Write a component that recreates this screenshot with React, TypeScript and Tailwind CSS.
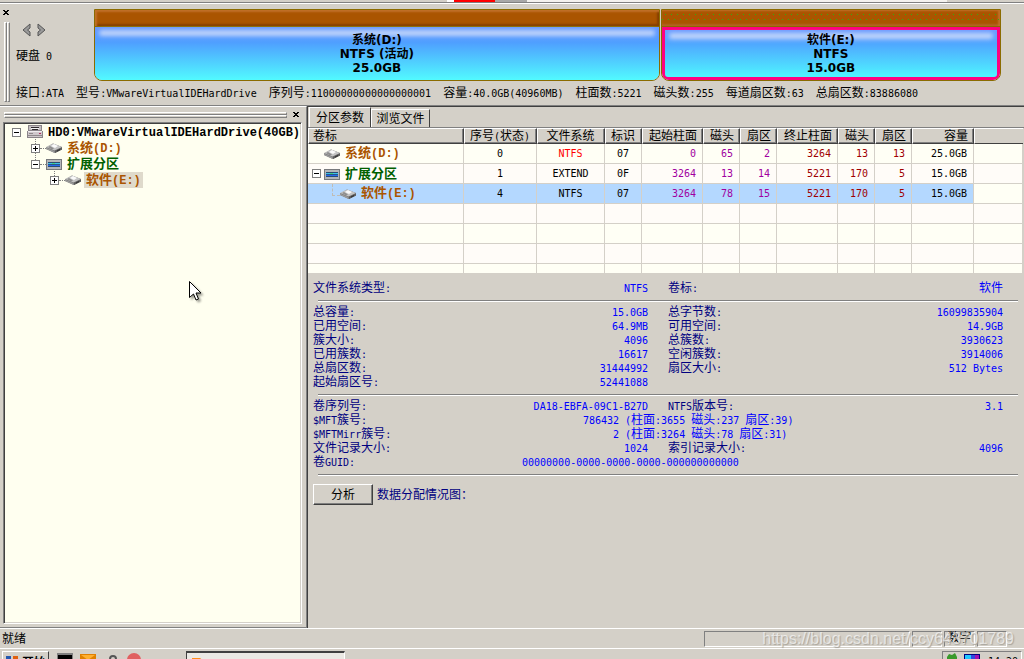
import React from "react";

const SANS = "font-['DejaVu_Sans_Mono','Noto_Sans_CJK_SC',monospace]";

/* Latin runs are set smaller than the Chinese so that a letter takes half a Chinese cell. */
function Txt({ children, bold = false }: { children: string; bold?: boolean }) {
  const runs = children.match(/[\x00-\x7f]+|[^\x00-\x7f]+/g) ?? [];
  return (
    <span className={bold ? "whitespace-pre font-bold text-[13px]" : "whitespace-pre text-[12px]"}>
      {runs.map((r, i) =>
        r.charCodeAt(0) < 128 ? (
          <span key={i} className={bold ? "font-['Liberation_Mono',monospace] text-[12px]" : "text-[10px]"}>
            {r}
          </span>
        ) : (
          <React.Fragment key={i}>{r}</React.Fragment>
        ),
      )}
    </span>
  );
}

function CloseIcon() {
  return (
    <svg width="7" height="6" viewBox="0 0 7 6" shapeRendering="crispEdges" aria-hidden="true">
      <path d="M0 0h2v1h-2zM4 0h2v1h-2zM1 1h4v1h-4zM2 2h2v1h-2zM1 3h4v1h-4zM0 4h2v1h-2zM4 4h2v1h-2z" />
    </svg>
  );
}

function VolumeIcon() {
  return (
    <svg width="16" height="16" viewBox="0 0 16 16" className="shrink-0" aria-hidden="true">
      <path d="M0 7.500L7 3.500 16 7v2.500L9 13 0 9z" fill="#707070" />
      <path d="M0 7L7 3.500 16 7 8.500 10.500z" fill="#c4c4c4" />
      <path d="M5 6L8 4 12 6 9 8z" fill="#fafafa" />
      <path d="M0 7.500l8.500 3.500v2L0 9z" fill="#9a9a9a" />
      <path d="M9 11l7-3.500v2L9 13z" fill="#5c5c5c" />
      <path d="M11 10.500l3-1.500v1l-3 1.500z" fill="#2f2f2f" />
      <path d="M2 7l2-1 4 2.500-2 1z" fill="#8e8e8e" />
    </svg>
  );
}

function DiskIcon() {
  return (
    <svg width="16" height="16" viewBox="0 0 16 16" shapeRendering="crispEdges" className="shrink-0" aria-hidden="true">
      <path d="M1 1h14v6h1v7H0V7h1z" fill="#8b8589" />
      <path d="M2 2h12v4H2z" fill="#c4bec1" />
      <path d="M1 7h14v1H1z" fill="#f0ecee" />
      <path d="M1 8h14v5H1z" fill="#cfc8cb" />
      <path d="M4 3h8v1H4zM5 5h6v1H5z" fill="#2e2a2c" />
      <path d="M4 4h8v1H4z" fill="#f4f4f4" />
      <path d="M2 9h4v1H2zM1 11h14v1H1z" fill="#8f898b" />
      <path d="M12 9h2v1h-2z" fill="#b03060" />
    </svg>
  );
}

function ExtendIcon() {
  return (
    <svg width="16" height="16" viewBox="0 0 16 16" shapeRendering="crispEdges" className="shrink-0" aria-hidden="true">
      <path d="M0 3h16v11H0z" fill="#77797c" />
      <path d="M1 4h14v9H1z" fill="#b4b6b9" />
      <path d="M2 6h12v5H2z" fill="#2c4c72" />
      <path d="M2 7h5v1H2zM9 7h5v1H9z" fill="#40c0e8" />
      <path d="M2 8h12v1H2z" fill="#285888" />
      <path d="M2 9h12v1H2z" fill="#2868f0" />
      <path d="M6 7h3v1H6z" fill="#45d080" />
    </svg>
  );
}

function Expander({ open }: { open: boolean }) {
  return (
    <button aria-label={open ? "折叠" : "展开"} className="size-[9px] shrink-0 border border-[#808080] bg-white">
      <svg width="7" height="7" viewBox="0 0 7 7" shapeRendering="crispEdges" className="block">
        <path d={open ? "M1 3h5v1H1z" : "M1 3h5v1H1zM3 1h1v5H3z"} />
      </svg>
    </button>
  );
}

function UsedDots() {
  return (
    <svg width="100%" height="16" className="block" shapeRendering="crispEdges" aria-hidden="true">
      <defs>
        <pattern id="dots" width="6" height="10" patternUnits="userSpaceOnUse">
          <path d="M3 4h1v1H3zM0 9h1v1H0z" fill="#30b010" />
        </pattern>
      </defs>
      <rect width="100%" height="10" fill="url(#dots)" />
    </svg>
  );
}

function Partition({ name, fs, size, grow, selected }: { name: string; fs: string; size: string; grow: string; selected?: boolean }) {
  return (
    <button className={`${grow} flex min-w-0 basis-0 flex-col overflow-hidden rounded-b-lg border border-[#8b6b00] text-[12px] leading-[14px] font-bold font-['DejaVu_Sans','Noto_Sans_CJK_SC',sans-serif]`}>
      <span
        className={
          selected
            ? "h-[17px] w-full border-b border-[#8b6b00] bg-[#aa5500] shadow-[inset_-2px_1px_2px_#c07028,inset_0_-2px_2px_#b06420]"
            : "h-[17px] w-full border-b border-[#8b6b00] bg-[#aa5500] shadow-[inset_2px_2px_2px_#c07028,inset_-2px_-2px_2px_#864000]"
        }
      >
        {selected && <UsedDots />}
      </span>
      <span
        className={
          selected
            ? "relative flex w-full grow flex-col rounded-b-md border-3 border-[#ff0080] bg-linear-to-b from-[#6f9cff] via-[#4fa8ff] via-30% to-[#4ff4ff] pt-[3px]"
            : "relative flex w-full grow flex-col bg-linear-to-b from-[#6797ff] via-[#4fa0ff] via-30% to-[#52faff] pt-[6px]"
        }
      >
        <span className="absolute inset-x-1 top-[3px] h-[6px] rounded-full bg-[#c0d4fa] blur-[2px]" />
        <span className="relative">{name}</span>
        <span className="relative">{fs}</span>
        <span className="relative">{size}</span>
      </span>
    </button>
  );
}

function TreeRow({ indent, open, icon, label, color, selected, guides }: { indent: string; open: boolean; icon: React.ReactNode; label: string; color: string; selected?: boolean; guides?: boolean }) {
  return (
    <li className={`flex h-4 items-center ${indent}`}>
      <span className="relative flex">
        {guides && <span className="absolute -top-[7px] left-[4px] h-[7px] border-l border-dotted border-[#808080]" />}
        <Expander open={open} />
      </span>
      <span className={guides ? "w-[6px] shrink-0 border-t border-dotted border-[#808080]" : "w-[6px] shrink-0"} />
      {icon}
      <span className={`ml-[3px] flex h-4 items-center px-[2px] ${color} ${selected ? "bg-[#dfdacb]" : ""}`}>
        <Txt bold>{label}</Txt>
      </span>
    </li>
  );
}

const columns = [
  { title: "卷标", width: "w-[156px]", align: "text-left" },
  { title: "序号(状态)", width: "w-[73px]", align: "text-center" },
  { title: "文件系统", width: "w-[68px]", align: "text-center" },
  { title: "标识", width: "w-[37px]", align: "text-center" },
  { title: "起始柱面", width: "w-[61px]", align: "text-right" },
  { title: "磁头", width: "w-[37px]", align: "text-right" },
  { title: "扇区", width: "w-[37px]", align: "text-right" },
  { title: "终止柱面", width: "w-[61px]", align: "text-right" },
  { title: "磁头", width: "w-[37px]", align: "text-right" },
  { title: "扇区", width: "w-[37px]", align: "text-right" },
  { title: "容量", width: "w-[62px]", align: "text-right" },
];

const volumes = [
  { name: "系统(D:)", kind: "volume", cells: ["0", "NTFS", "07", "0", "65", "2", "3264", "13", "13", "25.0GB"] },
  { name: "扩展分区", kind: "extend", cells: ["1", "EXTEND", "0F", "3264", "13", "14", "5221", "170", "5", "15.0GB"] },
  { name: "软件(E:)", kind: "child", cells: ["4", "NTFS", "07", "3264", "78", "15", "5221", "170", "5", "15.0GB"] },
];

function cellColor(row: number, col: number) {
  if (row === 0 && col === 1) return "text-[#ff0000]";
  if (col >= 3 && col <= 5) return "text-[#a000a0]";
  if (col >= 6 && col <= 8) return "text-[#a00000]";
  return "text-black";
}

function VolumeTable() {
  return (
    <div className="mr-px h-[145px] overflow-hidden">
      <table className="w-full table-fixed border-separate border-spacing-0">
        <thead>
          <tr className="h-4">
            {columns.map((c, i) => (
              <th key={i} className={`${c.width} ${c.align} h-4 border-t border-r border-b border-l border-t-white border-l-white border-r-[#404040] border-b-[#404040] p-0 pr-[5px] pl-[4px] font-normal leading-[13px] whitespace-nowrap shadow-[inset_-1px_-1px_0_#808080]`}>
                <Txt>{c.title}</Txt>
              </th>
            ))}
            <th className="h-4 border-t border-b border-l border-t-white border-b-[#404040] border-l-white p-0" />
          </tr>
        </thead>
        <tbody>
          {volumes.map((v, r) => (
            <tr key={v.name} className={r === 1 ? "bg-[#fffcf8]" : "bg-[#fffff5]"}>
              <td className={`h-5 border-r border-b border-[#d4d0c8] p-0 leading-[18px] ${v.kind === "child" ? "bg-[#b4d8ff]" : ""}`}>
                <div className={`flex h-[19px] items-center ${v.kind === "volume" ? "pl-4" : v.kind === "child" ? "pl-6" : "pl-1"}`}>
                  {v.kind === "extend" && <Expander open />}
                  {v.kind === "child" && <span className="h-3 w-2 shrink-0 -translate-y-1 border-b border-l border-dashed border-[#c0bcb4]" />}
                  {v.kind === "extend" ? <span className="ml-[3px] flex"><ExtendIcon /></span> : <VolumeIcon />}
                  <span className={`ml-[5px] ${v.kind === "extend" ? "text-[#006000]" : "text-[#aa5500]"}`}>
                    <Txt bold>{v.name}</Txt>
                  </span>
                </div>
              </td>
              {v.cells.map((c, i) => (
                <td key={i} className={`h-5 border-r border-b border-[#d4d0c8] p-0 px-[6px] leading-[18px] whitespace-nowrap ${columns[i + 1].align} ${cellColor(r, i)} ${v.kind === "child" ? "bg-[#b4d8ff]" : ""}`}>
                  <Txt>{c}</Txt>
                </td>
              ))}
              <td className="border-r border-b border-[#d4d0c8] p-0" />
            </tr>
          ))}
          {[0, 1, 2, 3].map((r) => (
            <tr key={r} className={r % 2 === 0 ? "bg-[#fffcf8]" : "bg-[#fffff5]"}>
              {Array.from({ length: 12 }, (_, i) => (
                <td key={i} className="h-5 border-r border-b border-[#d4d0c8] p-0" />
              ))}
            </tr>
          ))}
        </tbody>
      </table>
    </div>
  );
}

function Pair({ label, value }: { label: string; value: string }) {
  return (
    <div className="flex h-[14px] items-center justify-between text-[#0000ff]">
      <dt className="text-[#000080]">
        <Txt>{label}</Txt>
      </dt>
      <dd>
        <Txt>{value}</Txt>
      </dd>
    </div>
  );
}

function Wide({ label, value, note }: { label: string; value: string; note: string }) {
  return (
    <div className="col-span-2 flex h-[14px] items-center text-[#0000ff]">
      <dt className="w-[120px] text-[#000080]">
        <Txt>{label}</Txt>
      </dt>
      <dd className="flex">
        <span className="w-[186px] text-right">
          <Txt>{value}</Txt>
        </span>
        <Txt>{note}</Txt>
      </dd>
    </div>
  );
}

const Rule = () => <hr className="ml-[5px] h-[2px] border-0 border-t border-b border-t-[#808080] border-b-white" />;

function Details() {
  return (
    <section className="pt-2 pr-[6px] pl-[5px]">
      <dl className="grid grid-cols-2 gap-x-5 pr-[15px]">
        <Pair label="文件系统类型:" value="NTFS" />
        <Pair label="卷标:" value="软件" />
      </dl>
      <div className="pt-[5px] pb-[3px]"><Rule /></div>
      <dl className="grid grid-cols-2 gap-x-5 pr-[15px]">
        <Pair label="总容量:" value="15.0GB" />
        <Pair label="总字节数:" value="16099835904" />
        <Pair label="已用空间:" value="64.9MB" />
        <Pair label="可用空间:" value="14.9GB" />
        <Pair label="簇大小:" value="4096" />
        <Pair label="总簇数:" value="3930623" />
        <Pair label="已用簇数:" value="16617" />
        <Pair label="空闲簇数:" value="3914006" />
        <Pair label="总扇区数:" value="31444992" />
        <Pair label="扇区大小:" value="512 Bytes" />
        <Pair label="起始扇区号:" value="52441088" />
      </dl>
      <div className="pt-[5px] pb-[3px]"><Rule /></div>
      <dl className="grid grid-cols-2 gap-x-5 pr-[15px]">
        <Pair label="卷序列号:" value="DA18-EBFA-09C1-B27D" />
        <Pair label="NTFS版本号:" value="3.1" />
        <Wide label="$MFT簇号:" value="786432" note=" (柱面:3655 磁头:237 扇区:39)" />
        <Wide label="$MFTMirr簇号:" value="2" note=" (柱面:3264 磁头:78 扇区:31)" />
        <Pair label="文件记录大小:" value="1024" />
        <Pair label="索引记录大小:" value="4096" />
        <div className="col-span-2 flex h-[14px] items-center text-[#0000ff]">
          <dt className="w-[209px] text-[#000080]"><Txt>卷GUID:</Txt></dt>
          <dd><Txt>00000000-0000-0000-0000-000000000000</Txt></dd>
        </div>
      </dl>
      <div className="pt-[5px] pb-2"><Rule /></div>
      <div className="flex items-center gap-1">
        <button className="h-[21px] w-[60px] border border-t-white border-r-[#404040] border-b-[#404040] border-l-white leading-[16px] shadow-[inset_-1px_-1px_0_#808080]">
          <Txt>分析</Txt>
        </button>
        <span className="text-[#000080]"><Txt>数据分配情况图：</Txt></span>
      </div>
    </section>
  );
}

const info = [
  "接口:ATA",
  "型号:VMwareVirtualIDEHardDrive",
  "序列号:11000000000000000001",
  "容量:40.0GB(40960MB)",
  "柱面数:5221",
  "磁头数:255",
  "每道扇区数:63",
  "总扇区数:83886080",
];

export default function App() {
  return (
    <div className={`relative flex h-screen flex-col overflow-hidden bg-[#d4d0c8] text-[12px] leading-[14px] text-black ${SANS}`}>
      <div className="flex h-[2px] shrink-0 pl-[447px]">
        <span className="w-[7px] bg-white" />
        <span className="w-[41px] bg-[#ff0000]" />
        <span className="w-[32px] bg-[#a8a8a8]" />
        <span className="w-[420px] bg-[#f4f2ee]" />
      </div>
      <header className="flex shrink-0 border-t border-b border-t-[#808080] border-b-[#808080] shadow-[inset_0_1px_0_#fff]">
        <div className="flex h-[102px] w-[10px] shrink-0 flex-col items-end pt-[7px]">
          <button aria-label="关闭" className="h-[6px]"><CloseIcon /></button>
          <div className="mt-[6px] flex h-[80px]">
            <span className="w-[3px] border border-t-white border-r-[#808080] border-b-[#808080] border-l-white" />
            <span className="w-[3px] border border-t-white border-r-[#808080] border-b-[#808080] border-l-white" />
          </div>
        </div>
        <div className="flex min-w-0 grow flex-col pl-[6px]">
          <div className="flex pt-[6px] pr-[23px]">
            <div className="w-[78px] shrink-0 pt-[14px]">
              <div className="flex gap-[6px] pl-[6px]">
                <button aria-label="上一个硬盘">
                  <svg width="9" height="14" viewBox="0 0 9 14"><path d="M8 1v4L5.500 7 8 9v4L1 7z" fill="#9a9a9a" stroke="#555" /></svg>
                </button>
                <button aria-label="下一个硬盘">
                  <svg width="9" height="14" viewBox="0 0 9 14"><path d="M1 1v4L3.500 7 1 9v4L8 7z" fill="#9a9a9a" stroke="#555" /></svg>
                </button>
              </div>
              <div className="pt-3"><Txt>硬盘 0</Txt></div>
            </div>
            <div className="flex h-[72px] grow gap-px">
              <Partition name="系统(D:)" fs="NTFS (活动)" size="25.0GB" grow="grow-[25]" />
              <Partition name="软件(E:)" fs="NTFS" size="15.0GB" grow="grow-[15]" selected />
            </div>
          </div>
          <div className="flex gap-3 pt-[5px] whitespace-nowrap">
            {info.map((t) => <Txt key={t}>{t}</Txt>)}
          </div>
        </div>
      </header>

      <main className="flex min-h-0 grow">
        <aside className="flex w-[307px] shrink-0 flex-col border-t border-r border-b border-t-white border-r-[#808080] border-b-[#808080] pr-1 pl-[3px]">
          <div className="flex h-[15px] items-center gap-[6px] pr-[2px] pl-px">
            <div className="grow">
              <div className="h-[3px] border border-t-white border-r-[#808080] border-b-[#808080] border-l-white" />
              <div className="h-[3px] border border-t-white border-r-[#808080] border-b-[#808080] border-l-white" />
            </div>
            <button aria-label="关闭"><CloseIcon /></button>
          </div>
          <ul className="mb-[3px] grow border border-t-[#808080] border-r-white border-b-white border-l-[#808080] bg-[#fffff0] pt-px shadow-[inset_1px_1px_0_#404040,inset_-1px_-1px_0_#d4d0c8]">
            <TreeRow indent="pl-[8px]" open icon={<DiskIcon />} label="HD0:VMwareVirtualIDEHardDrive(40GB)" color="text-black" />
            <TreeRow indent="pl-[27px]" open={false} guides icon={<VolumeIcon />} label="系统(D:)" color="text-[#aa5500]" />
            <TreeRow indent="pl-[27px]" open guides icon={<ExtendIcon />} label="扩展分区" color="text-[#006000]" />
            <TreeRow indent="pl-[46px]" open={false} guides icon={<VolumeIcon />} label="软件(E:)" color="text-[#aa5500]" selected />
          </ul>
        </aside>
        <div className="min-w-0 grow border-t border-l border-[#404040]">
          <div role="tablist" className="flex h-[21px] items-end border-b border-[#808080] pl-px">
            <button role="tab" aria-selected="true" className="h-[20px] w-[62px] border-t border-r border-l border-t-white border-r-[#404040] border-l-white text-center"><Txt>分区参数</Txt></button>
            <button role="tab" aria-selected="false" className="h-[18px] w-[59px] border-t border-r border-l border-t-white border-r-[#404040] border-l-white text-center"><Txt>浏览文件</Txt></button>
          </div>
          <VolumeTable />
          <Details />
        </div>
      </main>

      <footer className="shrink-0">
        <div className="relative flex h-[20px] items-center border-t border-white pr-[17px] pl-[2px]">
          <span className="grow"><Txt>就绪</Txt></span>
          <div className="flex h-4 gap-[2px]">
            <span className="w-[206px] border border-t-[#808080] border-r-white border-b-white border-l-[#808080]" />
            <span className="w-[30px] border border-t-[#808080] border-r-white border-b-white border-l-[#808080]" />
            <span className="w-[31px] border border-t-[#808080] border-r-white border-b-white border-l-[#808080] text-center leading-[13px]"><Txt>数字</Txt></span>
            <span className="w-[30px] border border-t-[#808080] border-r-white border-b-white border-l-[#808080]" />
          </div>
          <span className="absolute top-0 right-[10px] font-['Liberation_Sans',sans-serif] text-[16px] leading-[20px] text-white/60 [text-shadow:1px_1px_1px_#a8a49c]">https://blog.csdn.net/ccy643701789</span>
        </div>
        <div className="flex h-[11px] items-start overflow-hidden border-t border-white pt-[2px] pr-[2px] pl-[2px]">
          <button className="flex h-[22px] w-[47px] shrink-0 items-start gap-1 border border-t-white border-r-[#404040] border-l-white pt-1 pl-[3px] font-bold leading-[14px]">
            <svg width="12" height="12" viewBox="0 0 12 12"><path d="M0 0h5v5H0z" fill="#2458b0" /><path d="M7 0h5v5H7z" fill="#e06010" /></svg>
            <Txt>开始</Txt>
          </button>
          <svg width="86" height="12" viewBox="0 0 86 12" className="mt-[2px] ml-2 shrink-0">
            <path d="M0 0h16v10H0z" fill="#808080" /><path d="M1 2h14v8H1z" />
            <path d="M23 1h16v9H23z" fill="#e08000" /><path d="M24 2h14l-7 5z" fill="#ffb030" />
            <circle cx="56" cy="6" r="3" fill="none" stroke="#555" strokeWidth="2" />
            <circle cx="77" cy="7" r="7" fill="#e06060" />
          </svg>
          <button aria-label="DiskGenius" className="ml-[43px] h-[22px] w-[159px] shrink-0 border border-t-2 border-t-[#404040] border-r-white border-l-[#404040] bg-[#ebe9e4] pt-px pl-1 text-left">
            <svg width="60" height="12" viewBox="0 0 60 12" className="block"><path d="M1 1h8l5 4v6H1z" fill="#ff8c1a" /><path d="M5 3h5l3 4H7z" fill="#ffd040" /><path d="M33 4h2v3h-2z" /></svg>
          </button>
          <span className="grow" />
          <div className="flex h-[22px] w-[80px] shrink-0 items-start gap-2 border border-t-[#808080] border-r-white border-l-[#808080] pl-[3px]">
            <svg width="34" height="12" viewBox="0 0 34 12" className="mt-px">
              <path d="M1 4l2-3 3 1 3-2 2 4v6H1z" fill="#3a9a2c" />
              <path d="M18 1h16v11H18z" fill="#000080" /><path d="M19 2h6v9h-6z" fill="#20c8ff" /><path d="M25 2h4v9h-4z" fill="#3048e0" /><path d="M29 2h4v9h-4z" fill="#a010b0" />
            </svg>
            <span className="pt-[2px]"><Txt>14:20</Txt></span>
          </div>
        </div>
      </footer>

      <svg width="16" height="24" viewBox="0 0 16 24" className="pointer-events-none absolute top-[281px] left-[189px] drop-shadow-[2px_2px_1px_rgba(0,0,0,0.4)]" aria-hidden="true">
        <path d="M0.500 0.500v16l4-3.500 2.500 6 2.500-1-2.500-6h5z" fill="#fff" stroke="#000" />
      </svg>
    </div>
  );
}
